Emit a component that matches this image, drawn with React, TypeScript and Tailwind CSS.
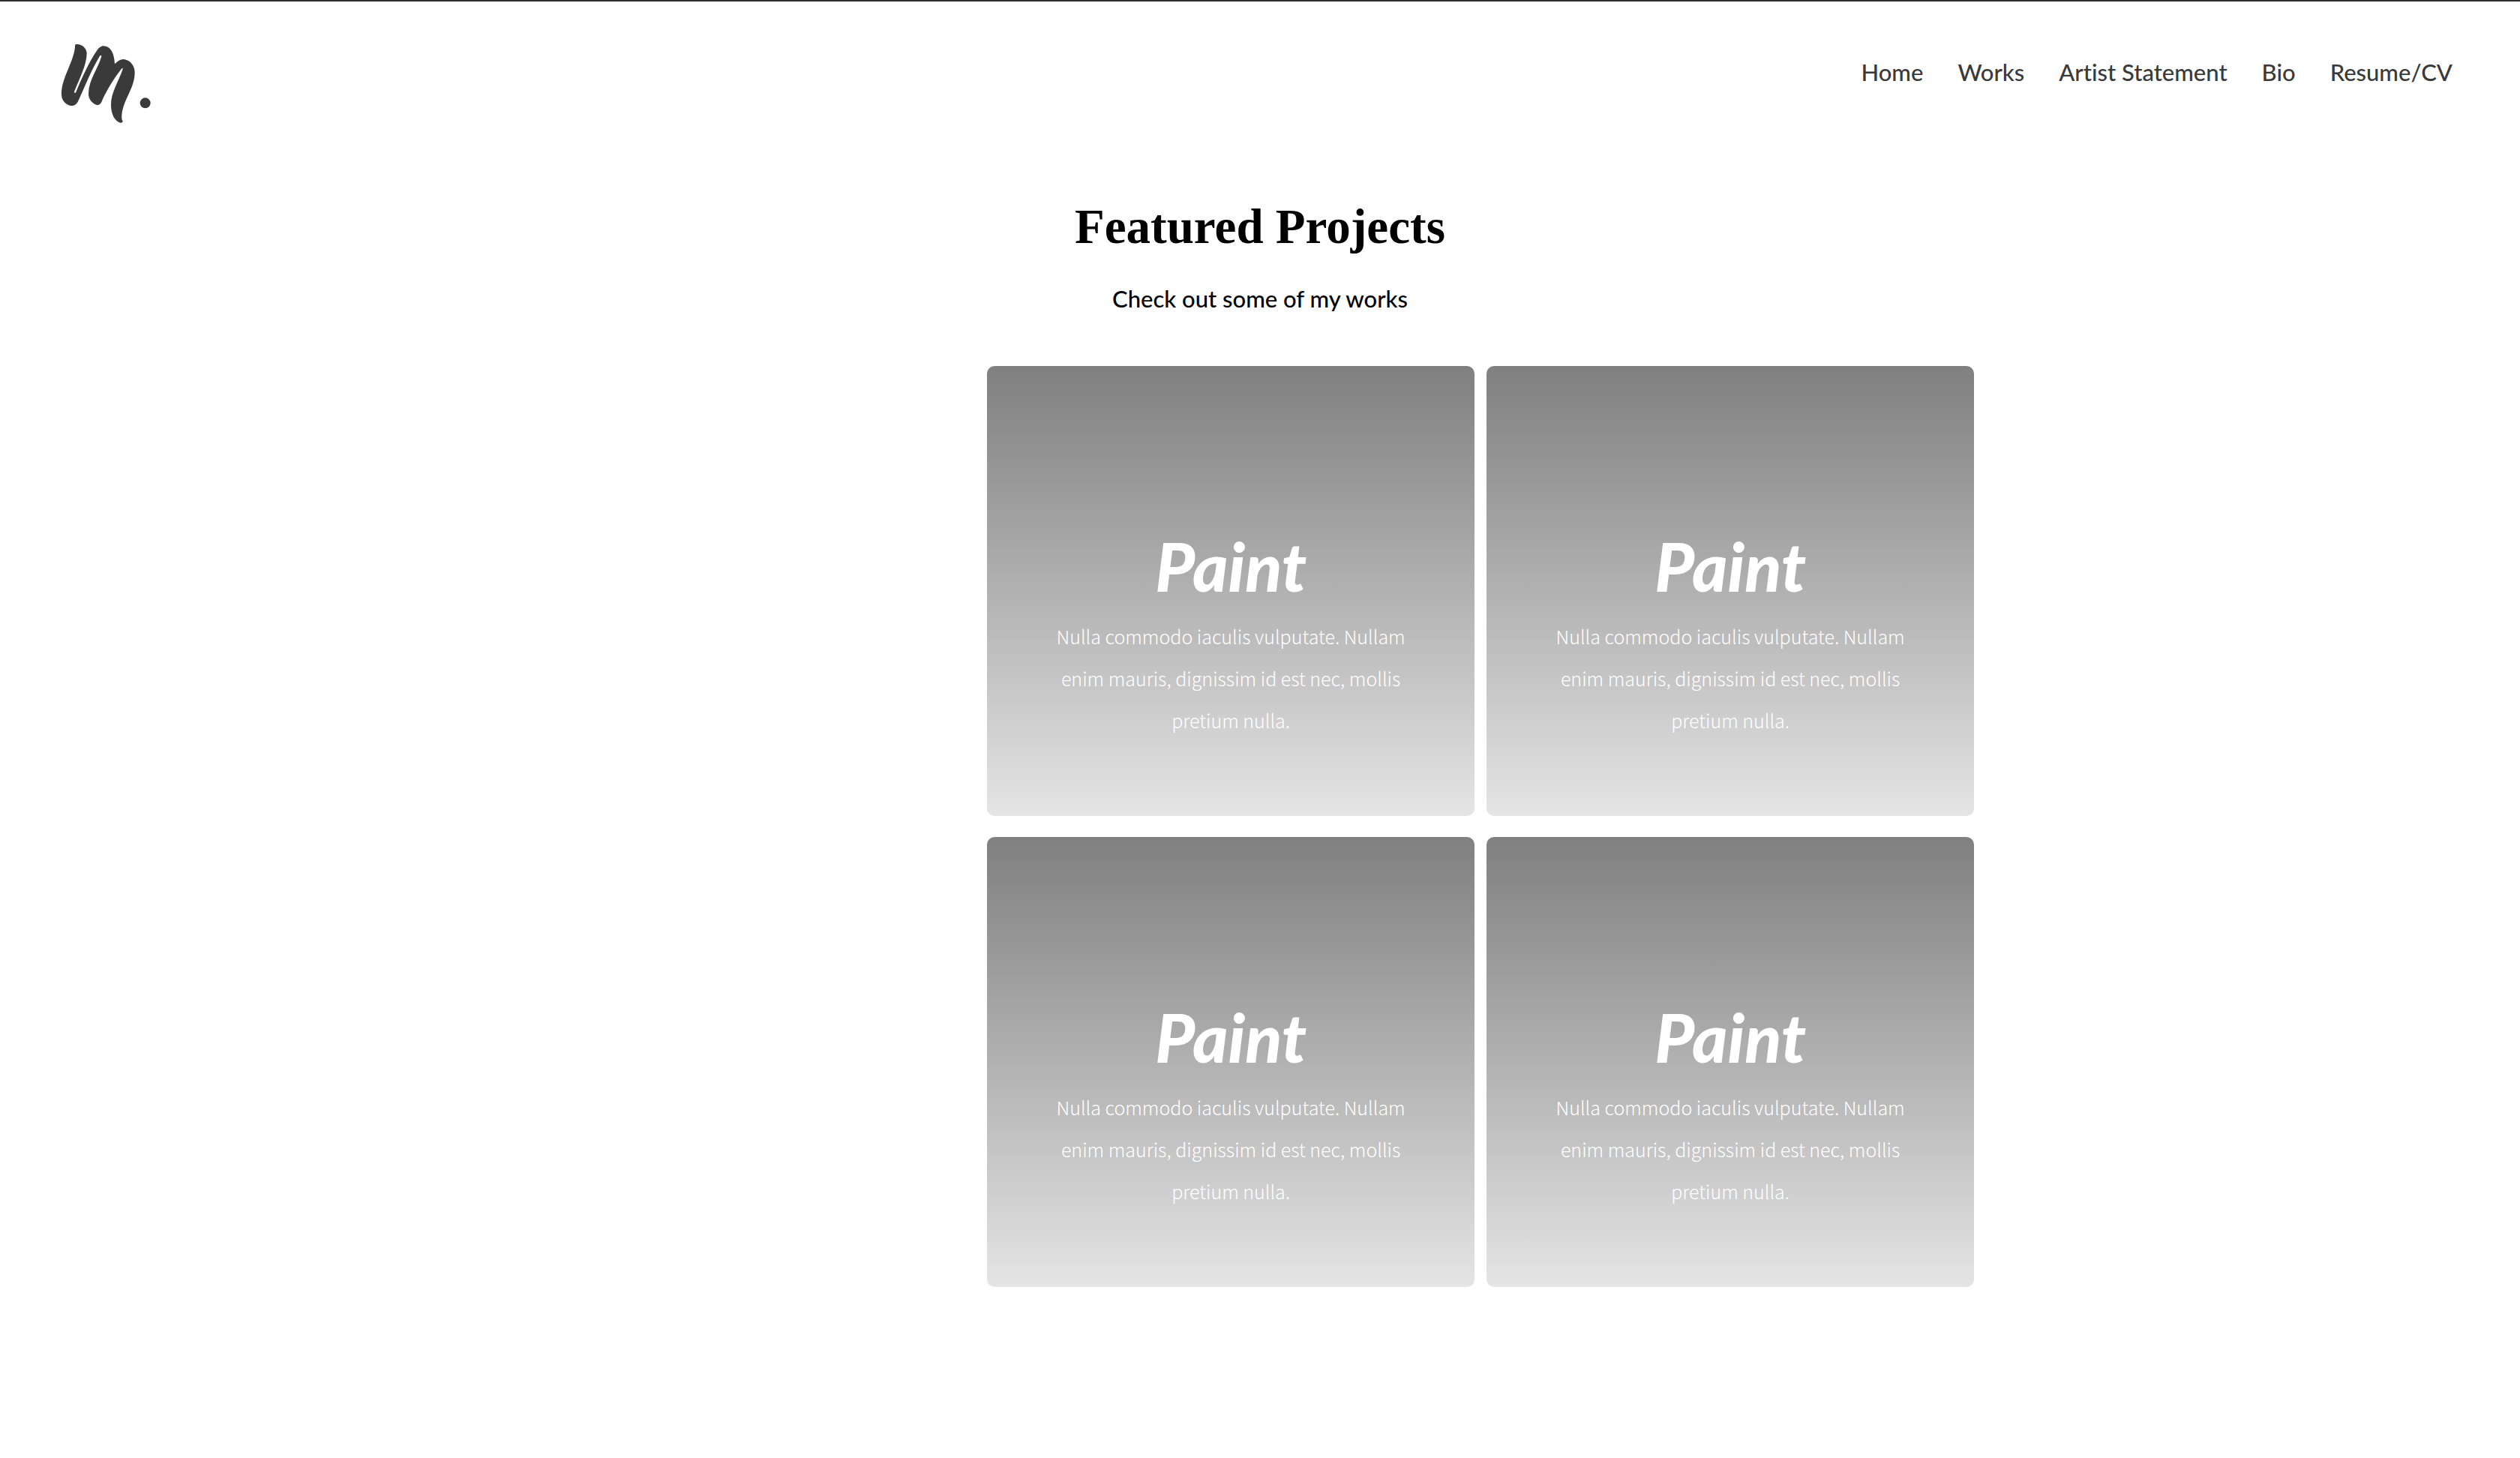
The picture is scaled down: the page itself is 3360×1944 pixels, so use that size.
const navLinks = [
  { label: 'Home', href: '#home' },
  { label: 'Works', href: '#works' },
  { label: 'Artist Statement', href: '#statement' },
  { label: 'Bio', href: '#bio' },
  { label: 'Resume/CV', href: '#resume' },
];

const projects = [1, 2, 3, 4].map((id) => ({
  id,
  title: 'Paint',
  text: 'Nulla commodo iaculis vulputate. Nullam enim mauris, dignissim id est nec, mollis pretium nulla.',
}));

function Logo() {
  return (
    <svg viewBox="60 168 372 336" className="h-[112px] w-[124px]" fill="#3a3a3a" aria-hidden="true">
      <path d="M122 178C140 172 168 190 167 214C167 262 135 320 117 367C117 373 122 373 124 368C148 310 178 245 206 205C216 190 224 184 234 184C262 185 277 212 279 256C291 244 303 236 315 237C342 240 360 265 359 292C358 355 314 396 307 460C306 475 308 480 311 484C311 489 307 492 302 491C280 486 264 458 264 420C263 370 297 322 311 276C311 271 308 271 306 275C274 315 244 365 225 410C219 419 213 421 206 419C190 414 173 396 174 374C175 320 212 275 226 226C226 220 222 220 219 224C185 280 160 345 132 406C124 420 115 424 104 423C84 419 67 402 66 380C64 315 112 255 120 190C120 183 120 179 122 178Z" />
      <circle cx="401" cy="412" r="21" />
    </svg>
  );
}

function ProjectCard({ title, text }: { title: string; text: string }) {
  return (
    <article className="h-[600px] rounded-[10px] bg-linear-to-b from-[#808080] to-[#e5e5e5] px-20 pt-[216px] text-center text-white">
      <h2 className="font-['Lato',sans-serif] text-[90px] leading-[100px] font-black italic">{title}</h2>
      <p className="mt-4 font-['Noto_Sans_CJK_SC',sans-serif] text-[25px] leading-[56px] font-light">{text}</p>
    </article>
  );
}

export default function App() {
  return (
    <div className="min-h-screen border-t-2 border-[#2d2d2f] bg-white font-['Lato',sans-serif] text-[31px] leading-10 font-medium text-black [font-variant-ligatures:none]">
      <header className="flex items-start justify-between pt-[54px] pr-[90px] pl-20">
        <a href="#home" aria-label="Home page">
          <Logo />
        </a>
        <nav className="mt-5 flex gap-[46px] text-[#3a3a3a]">
          {navLinks.map((link) => (
            <a key={link.label} href={link.href}>
              {link.label}
            </a>
          ))}
        </nav>
      </header>
      <main className="pt-[94px]">
        <div className="text-center">
          <h1 className="font-['Liberation_Serif',serif] text-[65px] leading-[80px] font-bold">Featured Projects</h1>
          <p className="mt-9">Check out some of my works</p>
        </div>
        <section className="mt-[70px] ml-[39.17%] grid max-w-[1316px] grid-cols-2 gap-x-4 gap-y-7">
          {projects.map((project) => (
            <ProjectCard key={project.id} title={project.title} text={project.text} />
          ))}
        </section>
      </main>
    </div>
  );
}
